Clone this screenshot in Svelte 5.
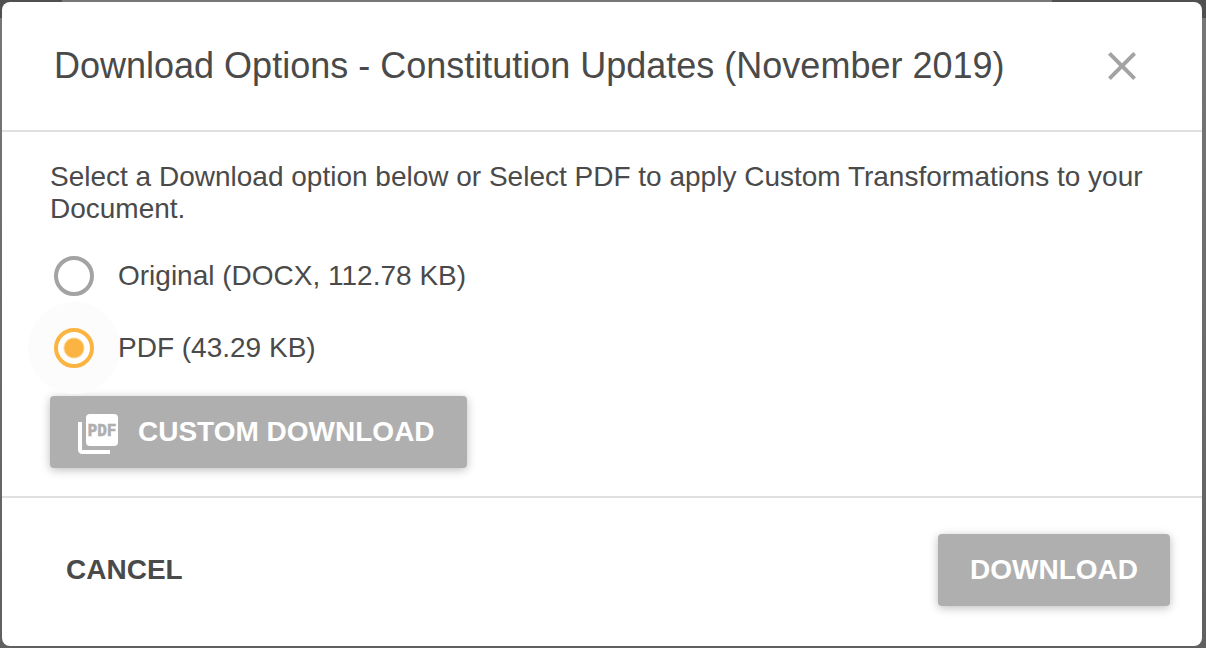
<script>
  const title = "Download Options - Constitution Updates (November 2019)";

  const formats = [
    { id: "original", label: "Original (DOCX, 112.78 KB)" },
    { id: "pdf", label: "PDF (43.29 KB)" },
  ];

  let selected = $state("pdf");
  let open = $state(true);

  function close() {
    open = false;
  }
</script>

<div class="backdrop">
  {#if open}
    <div class="dialog" role="dialog" aria-modal="true" aria-labelledby="dialog-title">
      <header>
        <h1 id="dialog-title">{title}</h1>
        <button class="close" aria-label="Close" onclick={close}>
          <svg viewBox="0 0 48 48" width="48" height="48">
            <path d="M38 12.82L35.18 10 24 21.18 12.82 10 10 12.82 21.18 24 10 35.18 12.82 38 24 26.82 35.18 38 38 35.18 26.82 24z" />
          </svg>
        </button>
      </header>

      <main>
        <p>
          Select a Download option below or Select PDF to apply Custom
          Transformations to your Document.
        </p>

        <div class="options" role="radiogroup" aria-labelledby="dialog-title">
          {#each formats as format}
            <label>
              <input type="radio" name="format" value={format.id} bind:group={selected} />
              {format.label}
            </label>
          {/each}
        </div>

        <button class="raised custom">
          <svg viewBox="0 0 48 48" width="48" height="48" aria-hidden="true">
            <rect x="12" y="4" width="32" height="32" rx="4" />
            <path d="M8 12H4v28c0 2.2 1.8 4 4 4h28v-4H8z" />
            <text x="28" y="26" text-anchor="middle">PDF</text>
          </svg>
          CUSTOM DOWNLOAD
        </button>
      </main>

      <footer>
        <button class="flat" onclick={close}>CANCEL</button>
        <button class="raised">DOWNLOAD</button>
      </footer>
    </div>
  {/if}
</div>

<style>
  :global(body) {
    margin: 0;
    background: #606060;
  }

  .backdrop {
    box-sizing: border-box;
    min-height: 100vh;
    padding: 2px 4px 2px 2px;
    background:
      linear-gradient(90deg, #505050 62px, transparent 62px) 0 0 / 100% 18px no-repeat,
      linear-gradient(270deg, #505050 154px, transparent 154px) 0 0 / 100% 18px no-repeat,
      linear-gradient(#777, #606060);
    font-family: "Liberation Sans", Helvetica, Arial, sans-serif;
    font-size: 28px;
    line-height: 32px;
    color: #4a4a4a;
  }

  .dialog {
    background: #fff;
    border-radius: 8px;
  }

  header {
    display: flex;
    align-items: center;
    justify-content: space-between;
    padding: 40px 56px 40px 52px;
    border-bottom: 2px solid #e0e0e0;
  }

  h1 {
    margin: 0;
    font-size: 36px;
    font-weight: 400;
    line-height: 48px;
  }

  button {
    margin: 0;
    border: 0;
    padding: 0;
    background: none;
    color: inherit;
    font: inherit;
    cursor: pointer;
  }

  .close {
    display: flex;
    fill: #a3a3a3;
  }

  main {
    padding: 29px 48px 28px;
    border-bottom: 2px solid #e0e0e0;
  }

  p {
    margin: 0 0 31px;
  }

  .options {
    display: grid;
    justify-items: start;
    gap: 32px;
    margin: 0 4px 28px;
  }

  label {
    display: flex;
    align-items: center;
    gap: 24px;
    cursor: pointer;
  }

  input {
    appearance: none;
    box-sizing: border-box;
    width: 40px;
    height: 40px;
    margin: 0;
    border: 4px solid #a3a3a3;
    border-radius: 50%;
    outline: none;
  }

  input:checked {
    border-color: #fbb442;
    background: radial-gradient(circle, #fbb442 9px, #fff 11px);
    box-shadow: 0 0 0 26px #fcfcfc;
  }

  .raised,
  .flat {
    display: flex;
    align-items: center;
    min-height: 72px;
    padding: 0 32px;
    border-radius: 4px;
    font-weight: 700;
  }

  .flat {
    padding: 0 16px;
  }

  .raised {
    background: #afafaf;
    color: #fff;
    box-shadow: 0 2px 10px rgba(0, 0, 0, 0.26);
  }

  .custom {
    gap: 16px;
    padding-left: 24px;
    fill: #fff;
  }

  .custom svg {
    margin-top: 4px;
  }

  .custom text {
    fill: #afafaf;
    stroke: #afafaf;
    stroke-width: 0.6;
    font: 700 16px "DejaVu Sans Mono", monospace;
  }

  footer {
    display: flex;
    align-items: center;
    justify-content: space-between;
    padding: 36px 32px 40px 48px;
  }
</style>
